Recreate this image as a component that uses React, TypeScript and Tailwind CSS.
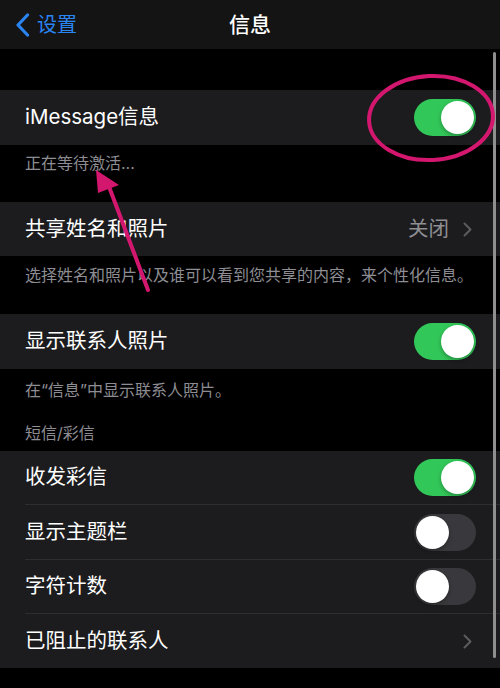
import React from "react";

const font = {
  fontFamily: '"Inter", "Noto Sans CJK SC", sans-serif',
};

function Toggle({ on }: { on: boolean }) {
  return (
    <div
      className={`relative w-[62px] h-[37px] rounded-full ${
        on ? "bg-[#32c759]" : "bg-[#39393d]"
      }`}
    >
      <div
        className={`absolute top-[2px] w-[33px] h-[33px] rounded-full bg-white shadow-[0_2px_4px_rgba(0,0,0,0.3)] ${
          on ? "right-[2px]" : "left-[2px]"
        }`}
      />
    </div>
  );
}

function Chevron() {
  return (
    <svg width="9" height="15" viewBox="0 0 9 15" fill="none">
      <path
        d="M1.5 1.5L7.5 7.5L1.5 13.5"
        stroke="#5b5b60"
        strokeWidth="2"
        strokeLinecap="round"
        strokeLinejoin="round"
      />
    </svg>
  );
}

interface RowProps {
  label: string;
  toggle?: boolean;
  value?: string;
  chevron?: boolean;
  last?: boolean;
  height?: string;
}

function Row({ label, toggle, value, chevron, last = true, height = "h-[55px]" }: RowProps) {
  return (
    <div className="bg-[#1c1c1e] pl-[25px]">
      <div
        className={`${height} flex items-center justify-between pr-[24px] ${
          last ? "" : "border-b border-[#2e2e31]"
        }`}
      >
        <span className="text-[20.5px] text-white leading-none">{label}</span>
        <div className="flex items-center gap-[14px]">
          {value && <span className="text-[20.5px] text-[#8e8e93] leading-none">{value}</span>}
          {toggle !== undefined && <Toggle on={toggle} />}
          {chevron && (
            <span className="pr-[4px] flex">
              <Chevron />
            </span>
          )}
        </div>
      </div>
    </div>
  );
}

function Footer({ text, className }: { text: string; className: string }) {
  return (
    <div className={`px-[25px] text-[16px] leading-[20px] text-[#8d8d93] ${className}`}>
      {text}
    </div>
  );
}

export default function App() {
  return (
    <div className="relative w-[500px] h-[688px] bg-black overflow-hidden" style={font}>
      {/* Nav bar */}
      <div className="h-[49px] bg-[#141414] grid grid-cols-[1fr_auto_1fr] items-center">
        <div className="flex items-center pl-[15px] gap-[7px]">
          <svg width="15" height="24" viewBox="0 0 15 24" fill="none">
            <path
              d="M12.5 2L3 12L12.5 22"
              stroke="#2a84f2"
              strokeWidth="3.2"
              strokeLinecap="round"
              strokeLinejoin="round"
            />
          </svg>
          <span className="text-[20px] text-[#2a84f2] leading-none">设置</span>
        </div>
        <span className="text-[21px] text-white font-medium leading-none">信息</span>
        <div />
      </div>

      <div className="h-[41px]" />

      <Row label="iMessage信息" toggle={true} />
      <Footer text="正在等待激活..." className="h-[57px] pt-[8px]" />

      <Row label="共享姓名和照片" value="关闭" chevron height="h-[54px]" />
      <Footer
        text="选择姓名和照片以及谁可以看到您共享的内容，来个性化信息。"
        className="h-[58px] pt-[9px]"
      />

      <Row label="显示联系人照片" toggle={true} />
      <div className="h-[82px] flex flex-col">
        <Footer text="在“信息”中显示联系人照片。" className="pt-[11px]" />
        <Footer text="短信/彩信" className="pt-[23px]" />
      </div>

      <Row label="收发彩信" toggle={true} last={false} height="h-[54px]" />
      <Row label="显示主题栏" toggle={false} last={false} height="h-[55px]" />
      <Row label="字符计数" toggle={false} last={false} height="h-[54px]" />
      <Row label="已阻止的联系人" chevron height="h-[54px]" />

      {/* Scroll indicator */}
      <div className="absolute right-[4px] top-[52px] w-[3px] h-[606px] rounded-full bg-[#8f8f8f]" />

      {/* Annotation overlay */}
      <svg
        className="absolute inset-0 pointer-events-none"
        width="500"
        height="688"
        viewBox="0 0 500 688"
      >
        <ellipse
          cx="431"
          cy="118"
          rx="62"
          ry="42"
          fill="none"
          stroke="#d3176f"
          strokeWidth="4"
          transform="rotate(-3 431 118)"
        />
        <line
          x1="148"
          y1="290"
          x2="108"
          y2="184"
          stroke="#d3176f"
          strokeWidth="4"
          strokeLinecap="round"
        />
        <polygon points="96,170 119,185 98,193" fill="#d3176f" />
      </svg>
    </div>
  );
}
